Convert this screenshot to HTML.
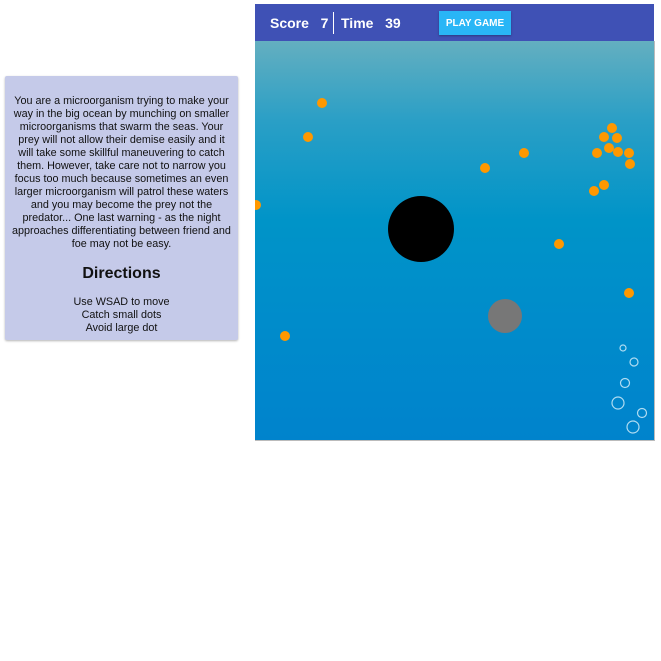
<!DOCTYPE html>
<html><head><style>
body{margin:0;width:661px;height:661px;background:#fff;position:relative;font-family:"Liberation Sans",sans-serif;overflow:hidden}
.panel{position:absolute;left:5px;top:76px;width:233px;height:264px;background:#c5cae9;box-shadow:0 1px 2px rgba(0,0,0,.3);text-align:center;font-size:10.8px;line-height:13px;color:#111;border-radius:2px;white-space:nowrap}
.panel p{margin:19px 0 0 0}
.panel h3{margin:13px 0 12px;font-size:16px;line-height:20px}
.hdr{position:absolute;left:255px;top:4px;width:399px;height:37px;background:#3f51b5;color:#fff;font-weight:bold;font-size:14px}
.hdr span{position:absolute;top:11px}
.sep{position:absolute;left:78px;top:8px;width:1px;height:22px;background:#fff}
.btn{position:absolute;left:184px;top:7px;width:72px;height:24px;background:#29b6f6;font-size:10px;line-height:25px;text-align:center;box-shadow:0 1px 2px rgba(0,0,0,.3)}
.game{position:absolute;left:255px;top:41px;width:399px;height:399px;background:linear-gradient(#64afc0 0%,#2a9fc6 20%,#0094c8 45%,#008ccb 70%,#0083cc 100%);overflow:hidden;border-right:1px solid #bbb;border-bottom:1px solid #bbb}
</style></head><body>
<div class="panel"><p>You are a microorganism trying to make your<br>way in the big ocean by munching on smaller<br>microorganisms that swarm the seas. Your<br>prey will not allow their demise easily and it<br>will take some skillful maneuvering to catch<br>them. However, take care not to narrow you<br>focus too much because sometimes an even<br>larger microorganism will patrol these waters<br>and you may become the prey not the<br>predator... One last warning - as the night<br>approaches differentiating between friend and<br>foe may not be easy.</p>
<h3>Directions</h3>
<div>Use WSAD to move<br>Catch small dots<br>Avoid large dot</div></div>
<div class="hdr"><span style="left:15px">Score&nbsp;&nbsp; 7</span><div class="sep"></div><span style="left:86px">Time&nbsp;&nbsp; 39</span><div class="btn">PLAY GAME</div></div>
<div class="game">
<svg width="399" height="399" viewBox="255 41 399 399" style="position:absolute;left:0;top:0">
<g fill="#ff9800">
<circle cx="322" cy="103" r="5"/><circle cx="308" cy="137" r="5"/><circle cx="485" cy="168" r="5"/><circle cx="524" cy="153" r="5"/><circle cx="256" cy="205" r="5"/><circle cx="559" cy="244" r="5"/><circle cx="629" cy="293" r="5"/><circle cx="285" cy="336" r="5"/><circle cx="612" cy="128" r="5"/><circle cx="604" cy="137" r="5"/><circle cx="617" cy="138" r="5"/><circle cx="609" cy="148" r="5"/><circle cx="597" cy="153" r="5"/><circle cx="618" cy="152" r="5"/><circle cx="629" cy="153" r="5"/><circle cx="630" cy="164" r="5"/><circle cx="604" cy="185" r="5"/><circle cx="594" cy="191" r="5"/>
</g>
<circle cx="421" cy="229" r="33" fill="#000"/>
<circle cx="505" cy="316" r="17" fill="#777"/>
<g fill="none" stroke="#b0dcf2" stroke-width="1.2">
<circle cx="623" cy="348" r="3"/><circle cx="634" cy="362" r="4"/><circle cx="625" cy="383" r="4.5"/><circle cx="618" cy="403" r="6"/><circle cx="642" cy="413" r="4.5"/><circle cx="633" cy="427" r="6"/>
</g>
</svg>
</div>
</body></html>
